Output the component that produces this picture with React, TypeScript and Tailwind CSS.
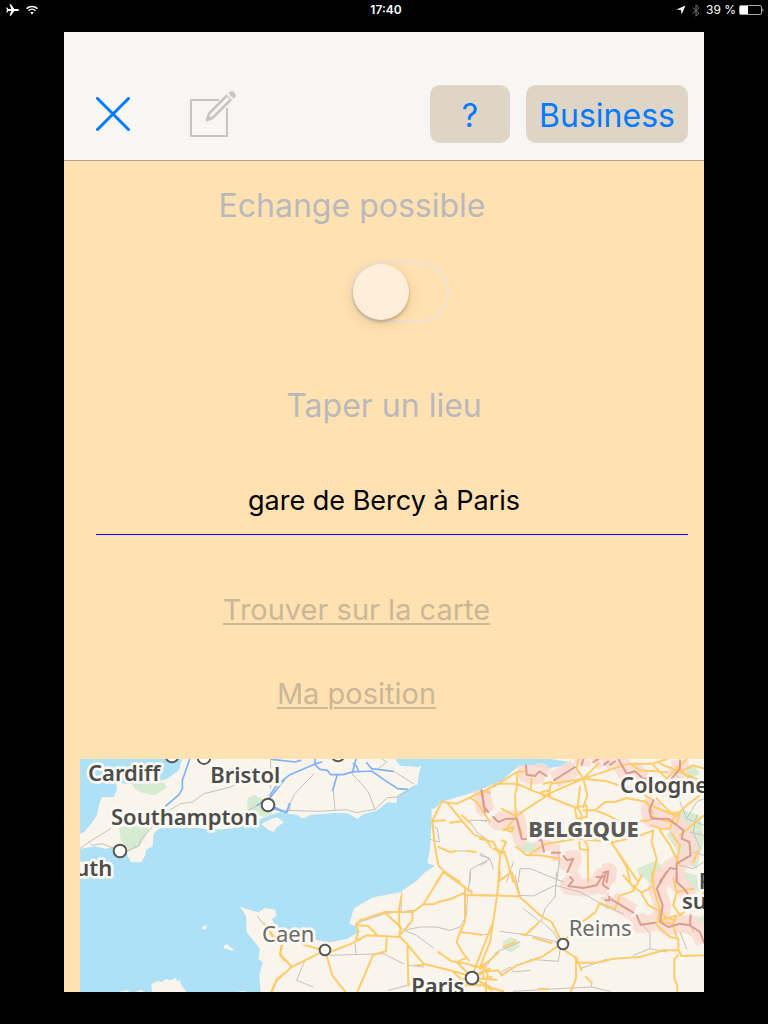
import { useState } from "react";

type Tile = {
  at: string;
  green?: string;
  border?: string;
  minor?: string;
  road?: string;
  motorway?: string;
};

const tiles: Tile[] = [
  {
    at: "translate(-48 -21)",
    green:
      "M205 95L300 92 308 108 270 130 235 122 212 112ZM165 225L205 220 255 225 250 245 225 285 195 297 170 265ZM550 140L570 128 600 145 625 185 600 195 550 178Z",
    minor:
      "M48 290L75 270 140 230M75 270L85 280 115 275 150 290M190 297L225 280 230 262 265 225 290 190 350 155 385 150 420 125 500 105 515 98M545 180L580 160M620 21V110",
    motorway: "M377 22L355 85 355 110 345 128 290 175 285 190 270 220M660 85L620 135 580 160M630 170L662 180",
  },
  {
    at: "translate(-48 339)",
    minor: "M580 132L597 155",
    road: "M600 155L632 197M655 220L648 248 660 265M660 305L638 322 622 360",
  },
  {
    at: "translate(570 -21)",
    border: "M635 115L642 165 655 180",
    minor:
      "M133 65L110 88 75 125 62 150 58 178M190 115L195 175M245 65L270 90 295 120 315 172M45 175L150 178 230 173 260 182 315 172 352 137 385 135 435 102M375 60L430 95M325 50L350 30 335 21M485 220L502 230 508 270 480 262M600 210L620 240 650 262M600 205H660M630 304L660 320 602 352 600 390M565 297H600",
    road: "M485 210L515 150 560 155 600 137 635 118 660 122M530 150L575 205 612 248 648 262 662 285M600 137L620 150 660 210M485 208L525 205M540 212L575 208M575 190L600 212M487 208L495 285 505 340 522 358 500 390M522 358L570 390M505 285L540 300 560 297M592 297L618 300",
    motorway:
      "M5 22L75 30 92 25M0 130L20 100 60 68 130 38 155 30M135 21V38L150 52 172 55 182 68 220 68 245 60 305 57M258 21L247 62M250 35L258 40 265 55M290 32L305 50 370 58M305 57L345 85 383 110 412 112M202 68L188 115M12 165L50 182 58 155",
  },
  {
    at: "translate(570 339)",
    minor:
      "M255 155L345 125 428 115M395 60L393 120M390 165L402 175 450 165 500 165 540 175 570 165 590 130 592 70M600 0L595 60M402 175L440 190 490 228M180 250L340 245 400 275M255 215L258 245M105 265L80 325 130 345M415 280L460 285M355 355L420 338M530 8L560 25",
    road: "M520 0L460 97 428 120 345 120 270 145M520 0L590 50 605 58V68M460 97L490 97 505 90 545 80 582 63 590 70 660 70M585 50V150L570 180 560 210 580 245 597 265M570 180L635 188M395 70L387 110 388 165M345 122L392 165 387 195M428 120L427 145 402 175 388 190M265 160L295 162 320 188M270 145L258 160 265 180 258 200 270 203M180 240L245 215 290 190 390 195 410 215 460 275 560 300 605 315M350 200L348 238 310 248 262 360M412 215L415 340M165 235L65 285 20 325 5 360M165 235L187 310 225 358M0 185L35 215 30 245 65 285M100 218L150 232M505 240L545 268 590 275M435 280H460M605 315L660 290M605 315L665 160M605 315L560 270 585 260M605 315L550 330M605 315L660 345M605 315L570 355M550 300L572 320 550 345M640 275L640 320 665 315M415 335L550 335M590 275L620 285 645 280M585 340L640 340 665 355",
  },
  {
    at: "translate(1200 -21)",
    green:
      "M100 285L140 270 175 275 170 305 130 300ZM470 350L530 325 550 350 520 385 480 375ZM560 250L610 175 660 190 672 260 650 350 610 330 580 280ZM610 50L640 35 660 65 625 85Z",
    border:
      "M138 40L140 68 165 72 178 58 200 72M222 85L285 45M305 40L310 21M340 30L355 21M372 38L385 28M390 38L405 28M415 21L440 65 465 58 490 80 505 80M600 25V50L575 80M5 115L15 180M40 195L55 210 80 200 110 200 125 260 138 262M178 265H185L192 300M215 302L240 302M250 312L262 325 280 320 262 360M350 375L370 375M370 362L385 358 380 390M520 145L508 175 515 200 565 200 610 235 605 260 628 270 632 310 590 335 590 390M540 388L570 348 590 352",
    minor:
      "M0 205L20 208M0 310L30 320 40 350M115 390L120 350 150 350 250 390M235 300L238 330 230 390M80 390L100 330M0 340L20 330M600 150L620 200 672 220M620 200L650 150 672 140M630 240L672 250M640 300L672 310M600 340L640 350 672 330M580 60L610 90 672 100M650 190L640 240 660 290",
    road: "M0 125L50 95 112 95M40 105L110 60 135 58M110 60L112 95 150 113 195 130M112 95L105 130 107 185 125 245M155 80L152 110M190 95L215 90 208 112 210 132 190 132 185 120 210 115M195 130L310 80M215 95L310 80M195 130L290 168M195 135L110 190 80 230M310 80L290 50 295 21M310 80L355 35M310 80L380 88 480 120 520 145M310 80L400 50 450 35 520 35 560 21M300 105L293 165 305 190 300 250M310 80L322 130 310 165M310 175H345L375 150 405 150 440 138 500 150 520 185M345 175L380 188 420 210 510 205M290 165L320 160 320 195 290 200 285 170M0 260L40 270 60 310 78 270 65 265M60 310L55 390M50 295L75 305 100 390M70 230L95 240 102 225 70 235M65 170L110 195M40 290L75 300M110 285L140 310 180 310 240 320M150 305L200 275 290 260 400 270 470 255 520 235M300 250L320 275 325 295 300 292 298 270M323 295L325 390M385 260L410 295 475 390M410 295L440 345 450 390M520 235L515 270 530 320 515 390M515 220L540 230 570 230 580 200 620 160 672 120M540 235L570 280 580 300 600 340M500 155L560 180 590 190M530 140L580 190M515 195L570 210 585 215M520 40L560 80 590 50 620 21M450 35L480 55 560 60M540 35L672 90M600 60L640 40 672 50M590 45L640 90M565 185L600 180 590 215 565 205M640 330L655 295M600 250L672 190M575 245L600 280 590 330",
  },
  {
    at: "translate(1200 339)",
    green:
      "M68 210L90 195 115 205 120 225 95 240 75 235ZM475 0H540L545 30 515 40ZM610 0L650 10 660 60 625 50ZM650 140L672 130V180Z",
    border:
      "M270 15L280 25 265 42 310 48 350 40 368 10M378 0L368 38 385 50M375 85H388V74M395 83L460 122M470 130L482 158 525 152M540 150L565 165 600 155 630 160 660 180 672 212M560 0L530 50 548 100 540 150M590 0V30L612 50 630 75M630 160L632 130",
    minor:
      "M60 178L150 190 240 212M0 190L30 185M120 70L160 72 225 40 300 60 355 90M105 10L120 70M230 0L225 75 195 110 185 145M130 110L175 145M180 145L220 180 235 205M240 235L235 268 150 262M150 295L100 300 90 285 65 300M0 310L50 240 120 210M355 95L430 125M490 160L510 185V230L560 240M510 230L460 250M300 290L380 262M335 345L390 358M100 358L270 348 335 345V330M600 180L620 230M630 150L640 180M640 100L672 110",
    road: "M95 0L105 30 120 75 180 130 215 150 245 210M0 70L120 73M60 25L95 0M60 0L50 80 30 210 0 285M245 215L185 255 110 280 65 310 55 295 0 300M0 285L18 287 25 320M0 320L50 323M18 320V360M20 345L70 358M175 350L205 352M0 290L55 242M70 225L105 210M140 185L178 150M160 197L215 213M250 210L300 155 345 122 360 92 405 112 420 70 460 58 485 10M460 58L462 40M485 65L505 100 545 120 560 140M430 10L460 45 485 62 515 45M515 0L525 65 540 110 530 160 570 195 595 200V235L605 252 672 250M245 230L285 255 290 272 350 272 400 260 480 255 550 235 595 235M288 270V320L272 360M288 255L305 295M318 315L335 332M595 250L583 260V320L592 340V360M540 145L590 130 580 155 545 150 555 135 585 145M580 160L590 195M580 20L590 60 580 100 600 130 660 80 672 60M590 60L640 50M125 187L140 190",
  },
];

const layers: { key: "green" | "border" | "minor" | "road" | "motorway"; paint: string }[] = [
  { key: "green", paint: "fill-[#d7ebd2]" },
  { key: "border", paint: "fill-none stroke-[#fadbd1]/85 stroke-[52]" },
  { key: "minor", paint: "fill-none stroke-[#c3c2bf] stroke-[3]" },
  { key: "road", paint: "fill-none stroke-[#ffcc6b] stroke-[6]" },
  { key: "motorway", paint: "fill-none stroke-[#7fb1f7] stroke-[5]" },
  { key: "border", paint: "fill-none stroke-[#dc9c90] stroke-[6]" },
];

const land =
  "M0 225L12 219 33 195 51 168 57 138 66 114 102 114 111 90 108 72 153 75 222 69 261 60 297 33 306 0H945L960 20 1015 24 1024 18 1020 32 1016 48 1013 76 980 92 952 110 950 132 922 130 890 155 850 166 832 180 805 163 760 162 690 168 676 176 664 178 652 168 600 160 570 168 542 180 490 195 460 208 400 213 350 206 240 208 228 216 220 228 218 262 198 272 196 288 184 310 152 310 138 278 100 262 80 270 45 262 0 270Z" +
  "M543 195L575 180 592 175 612 190 590 205 582 220 565 212Z" +
  "M542 699L538 650 548 610 535 600 540 570 500 519 498 470 480 443 500 450 535 460 555 447 585 452 590 470 575 480 590 505 640 515 690 540 750 550 800 540 838 518 835 505 808 494 822 448 880 415 960 400 1010 365 1035 340 1065 320 1042 312 1050 270 1055 185 1055 150 1065 148 1085 128 1165 105 1200 92 1265 65 1310 26 1350 18 1390 30 1440 22 1460 26 1485 18 1465 8 1410 0H1872V699Z" +
  "M216 699L214 675 235 665 245 670 258 660 270 664 288 656 290 666 300 664 305 680 320 699Z" +
  "M364 508L380 496 378 512ZM430 560L440 556 462 572 455 575 434 568ZM115 699L140 694 150 699ZM165 699L185 693 192 699ZM470 699L490 696 500 699Z";

const majorCities = [
  [276, -9],
  [372, -4],
  [774, -12],
  [564, 138],
  [120, 276],
  [1176, 657],
];

const minorCities = [
  [735, 573],
  [1449, 555],
];

type Place = { name: string; x: number; y: number; anchor?: "end"; look: string };

const places: Place[] = [
  { name: "Cardiff", x: 24, y: 67, look: "text-[66px] font-semibold fill-[#4d4c49]" },
  { name: "Bristol", x: 391, y: 71, look: "text-[66px] font-semibold fill-[#4d4c49]" },
  { name: "Southampton", x: 93, y: 197, look: "text-[66px] font-semibold fill-[#4d4c49]" },
  { name: "uth", x: 97, y: 351, anchor: "end", look: "text-[66px] font-semibold fill-[#4d4c49]" },
  { name: "Cologne", x: 1620, y: 101, look: "text-[66px] font-semibold fill-[#4d4c49]" },
  { name: "BELGIQUE", x: 1345, y: 233, look: "text-[66px] font-extrabold fill-[#5c5b58]" },
  { name: "Caen", x: 546, y: 549, look: "text-[66px] font-normal fill-[#6c6b68]" },
  { name: "Reims", x: 1466, y: 531, look: "text-[66px] font-normal fill-[#6c6b68]" },
  { name: "Paris", x: 994, y: 705, look: "text-[66px] font-semibold fill-[#4d4c49]" },
  { name: "F", x: 1856, y: 389, look: "text-[66px] font-semibold fill-[#4d4c49]" },
  { name: "su", x: 1806, y: 451, look: "text-[66px] font-semibold fill-[#4d4c49]" },
];

function RegionMap() {
  return (
    <svg
      viewBox="0 0 1872 699"
      preserveAspectRatio="xMinYMin slice"
      className="block min-h-[233px] w-full flex-1 bg-[#aee1f6]"
      role="img"
      aria-label="Carte"
    >
      <path d={land} className="fill-[#f9f5ed]" />
      {layers.map((layer, i) => (
        <g key={i} className={layer.paint} strokeLinejoin="round" strokeLinecap={i === 1 ? "butt" : "round"}>
          {tiles.map((tile) =>
            tile[layer.key] ? <path key={tile.at} transform={tile.at} d={tile[layer.key]} /> : null,
          )}
        </g>
      ))}
      <g className="fill-white stroke-[#595855] stroke-[6]">
        {majorCities.map(([x, y]) => (
          <circle key={x} cx={x} cy={y} r="19" />
        ))}
        {minorCities.map(([x, y]) => (
          <circle key={x} cx={x} cy={y} r="16" />
        ))}
      </g>
      <g
        className="stroke-[#fbf9f4] stroke-[16] font-['Noto_Sans',sans-serif]"
        paintOrder="stroke"
        strokeLinejoin="round"
      >
        {places.map((p) => (
          <text key={p.name} x={p.x} y={p.y} textAnchor={p.anchor} className={p.look}>
            {p.name}
          </text>
        ))}
      </g>
    </svg>
  );
}

function StatusBar() {
  return (
    <div className="grid h-5 grid-cols-3 items-center pr-1 pl-[6px] text-[12px] leading-5 text-white">
      <div className="flex items-center gap-[7px]">
        <svg viewBox="0 0 13 12" className="h-3 w-[13px] fill-white" aria-hidden="true">
          <path d="M13 6c0-.6-.7-.9-1.5-.9H8.3L4.9.3H3.6l1.6 4.8H2.4L1.2 3.6H.2L.9 6 .2 8.400h1L2.400 6.900h2.800L3.600 11.700h1.300L8.300 6.900h3.200c.8 0 1.500-.3 1.500-.9z" />
        </svg>
        <svg viewBox="0 0 12 10" className="h-[10px] w-3 fill-none stroke-white stroke-[1.500]" aria-hidden="true">
          <path d="M.6 3.600a7.700 7.700 0 0 1 10.800 0M2.600 5.700a4.900 4.900 0 0 1 6.800 0" />
          <path d="M6 9.500L4.200 7.600a2.700 2.700 0 0 1 3.600 0z" className="fill-white stroke-none" />
        </svg>
      </div>
      <div className="pl-[2px] text-center font-semibold">17:40</div>
      <div className="flex items-center justify-end">
        <svg viewBox="0 0 10 10" className="mr-[6px] h-[10px] w-[10px] fill-white" aria-hidden="true">
          <path d="M9.500.6L5.600 9.500 5 5.100.6 4.500z" />
        </svg>
        <svg viewBox="0 0 8 13" className="mr-[6px] h-[13px] w-2 fill-none stroke-[#777] stroke-1" aria-hidden="true">
          <path d="M.7 3.500L7 9.200 4 12.200V.8l3 3L.7 9.500" />
        </svg>
        <span className="mr-[3px]">39 %</span>
        <svg viewBox="0 0 25 10" className="h-[10px] w-[25px]" aria-hidden="true">
          <rect x=".5" y=".5" width="22" height="9" rx="1.500" className="fill-none stroke-[#aaa]" />
          <rect x="1" y="1" width="8" height="8" className="fill-white" />
          <path d="M23.500 3.200c1.200.5 1.200 3.100 0 3.600z" className="fill-[#ccc]" />
        </svg>
      </div>
    </div>
  );
}

export default function App() {
  const [exchange, setExchange] = useState(false);
  const [place, setPlace] = useState("gare de Bercy à Paris");

  return (
    <div className="flex min-h-screen flex-col bg-black font-['Inter',sans-serif]">
      <StatusBar />
      <main className="mx-16 mt-3 mb-8 flex flex-1 flex-col bg-[#ffe1b2]">
        <header className="flex items-end border-b border-[#b5a281] bg-[#f8f6f2] pt-[53px] pr-4 pb-[17px] pl-8">
          <button type="button" aria-label="Fermer" className="mb-3 block">
            <svg viewBox="0 0 34 34" className="block h-[34px] w-[34px] fill-none stroke-[#007aff] stroke-[3]">
              <path d="M1.500 1.500l31 31M32.500 1.500l-31 31" strokeLinecap="round" />
            </svg>
          </button>
          <button type="button" aria-label="Modifier" className="mb-[6px] ml-[60px] block">
            <svg viewBox="0 0 46 46" className="block h-[46px] w-[46px] fill-none stroke-[#c6c5c2] stroke-2">
              <path d="M29 9H1v36h36V17" />
              <path d="M17 29l2-6.500L37.500 4l4 4L23 26.500z" className="stroke-[2.500]" strokeLinejoin="round" />
              <path d="M16 30.500l2-6.500 4.500 4.500z" className="fill-[#c6c5c2] stroke-none" />
              <path d="M36.500 2.500l6.500 6.500" className="stroke-[#f8f6f2] stroke-[1.500]" />
              <path d="M38.500 2l2-1.500c2.500-1.200 6 2 5 4.700l-1.700 2.200z" className="fill-[#c6c5c2] stroke-none" />
            </svg>
          </button>
          <div className="ml-auto flex gap-4 text-[32px] text-[#007aff]">
            <button type="button" className="h-[58px] w-20 rounded-[10px] bg-[#ded5c6] pt-1">
              ?
            </button>
            <button type="button" className="h-[58px] w-[162px] rounded-[10px] bg-[#ded5c6] pt-1">
              Business
            </button>
          </div>
        </header>

        <form className="flex flex-1 flex-col" onSubmit={(e) => e.preventDefault()}>
          <label htmlFor="exchange" className="mt-[25px] pr-16 text-center text-[32px] leading-10 text-[#b9b9bb]">
            Echange possible
          </label>
          <div className="mt-[35px] flex justify-center pl-8">
            <input
              id="exchange"
              type="checkbox"
              role="switch"
              checked={exchange}
              onChange={(e) => setExchange(e.target.checked)}
              className="h-[62px] w-[100px] appearance-none rounded-full border-[3px] border-[#f2e2cb] before:block before:size-14 before:rounded-full before:bg-[#ffefda] before:shadow-[0_2px_3px_rgba(90,60,10,0.3),0_4px_14px_rgba(120,80,20,0.16)] checked:bg-[#4cd964] checked:before:ml-[38px]"
            />
          </div>
          <label htmlFor="place" className="mt-[63px] text-center text-[32px] leading-10 text-[#b9b9bb]">
            Taper un lieu
          </label>
          <input
            id="place"
            type="text"
            value={place}
            onChange={(e) => setPlace(e.target.value)}
            className="mt-[39px] mr-4 ml-8 h-[70px] border-b border-[#0000ff] bg-transparent pt-[2px] pr-4 text-center text-[27px] text-black outline-none"
          />
          <a
            href="#carte"
            className="mt-[55px] mr-[55px] self-center text-[29px] leading-10 text-[#cbb798] underline decoration-2 underline-offset-3"
          >
            Trouver sur la carte
          </a>
          <a
            href="#position"
            className="mt-11 mr-[55px] self-center text-[29px] leading-10 text-[#cbb798] underline decoration-2 underline-offset-3"
          >
            Ma position
          </a>
          <div id="carte" className="mt-[45px] flex flex-1 flex-col pl-4">
            <RegionMap />
          </div>
        </form>
      </main>
    </div>
  );
}
